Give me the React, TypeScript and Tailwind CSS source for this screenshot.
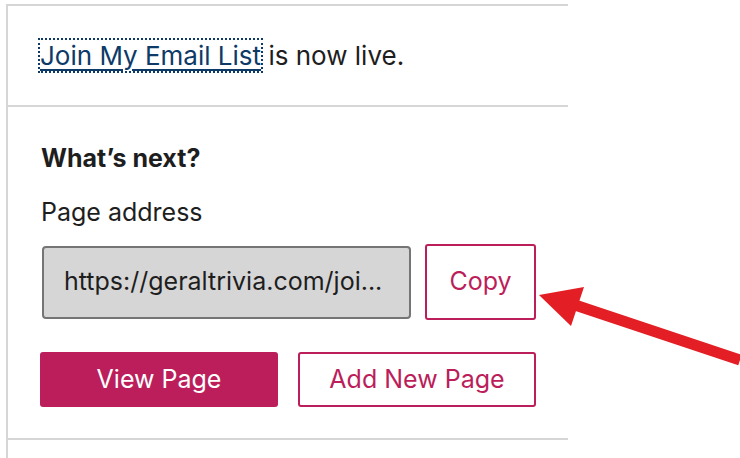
import React from "react";

export default function App() {
  return (
    <div className="relative w-[740px] h-[458px] bg-white overflow-hidden" style={{ fontFamily: "Inter, 'Noto Sans', sans-serif" }}>
      <div className="pl-[6px] pt-[4px]">
        <div className="w-[562px] h-[454px] border-l-2 border-[#d6d6d6]">
          <div className="border-t-2 border-b-2 border-[#d6d6d6] h-[103px] flex items-center pl-[32px]">
            <p className="text-[26px] leading-[32px] text-[#1e1e1e]">
              <a href="#" className="text-[#0e3a68] underline decoration-[2px] underline-offset-[4px] outline-2 outline-dotted outline-[#0e3a68] outline-offset-[0px]">Join My Email List</a>
              <span> is now live.</span>
            </p>
          </div>
          <div className="border-b-2 border-[#d6d6d6] h-[333px] pl-[33px] pt-[36px]">
            <h2 className="text-[25px] leading-[30px] font-bold text-[#1e1e1e]">What’s next?</h2>
            <div className="mt-[24px] text-[25px] leading-[30px] text-[#1e1e1e]">Page address</div>
            <div className="mt-[17px] flex items-center gap-[14px] ml-[1px]">
              <div className="w-[369px] h-[73px] rounded-[4px] border-2 border-[#757575] bg-[#d6d6d6] flex items-center pl-[20px] text-[25px] text-[#1e1e1e]">
                https://geraltrivia.com/joi...
              </div>
              <button className="w-[111px] h-[76px] rounded-[3px] border-2 border-[#bb1e5a] bg-white text-[#bb1e5a] text-[25px]">Copy</button>
            </div>
            <div className="mt-[32px] flex gap-[20px] -ml-[1px]">
              <button className="w-[238px] h-[55px] rounded-[3px] bg-[#bb1e5a] text-white text-[25px]">View Page</button>
              <button className="w-[238px] h-[55px] rounded-[3px] border-2 border-[#bb1e5a] bg-white text-[#bb1e5a] text-[25px]">Add New Page</button>
            </div>
          </div>
        </div>
      </div>
      <svg className="absolute left-0 top-0" width="740" height="458" viewBox="0 0 740 458">
        <line x1="740" y1="360" x2="572" y2="304" stroke="#e31e24" strokeWidth="11" />
        <polygon points="539,295 584,287 571,326" fill="#e31e24" />
      </svg>
    </div>
  );
}
